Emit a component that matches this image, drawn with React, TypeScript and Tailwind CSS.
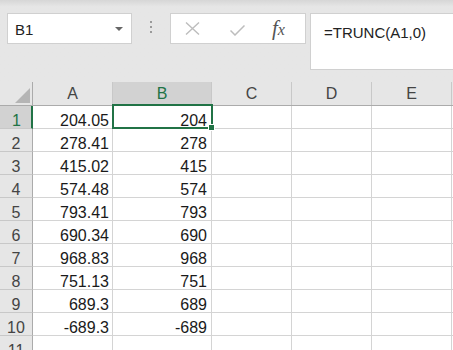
import React from "react";

const rowsData: [string, string][] = [
  ["204.05", "204"],
  ["278.41", "278"],
  ["415.02", "415"],
  ["574.48", "574"],
  ["793.41", "793"],
  ["690.34", "690"],
  ["968.83", "968"],
  ["751.13", "751"],
  ["689.3", "689"],
  ["-689.3", "-689"],
  ["", ""],
];

export default function App() {
  return (
    <div className="w-[453px] h-[350px] overflow-hidden bg-[#e6e6e6] font-['Liberation_Sans','Noto_Sans_CJK_SC',sans-serif] text-[#1a1a1a]">
      {/* Top: name box + formula bar */}
      <div className="h-[82px] bg-gradient-to-b from-[#d6d6d6] via-[#e6e6e6] via-[8%] to-[#e6e6e6]">
        <div className="flex items-start pt-[13px] pl-[7px]">
          <div className="w-[125px] h-[31px] border border-[#d0d0d0] bg-white flex items-center pl-[7px] pr-[7px]">
            <span className="text-[15px] leading-none text-[#222] mt-[1px]">B1</span>
            <span className="ml-auto mr-[1px] mt-[1px] w-0 h-0 border-l-[4px] border-r-[4px] border-t-[4px] border-l-transparent border-r-transparent border-t-[#666]" />
          </div>
          <div className="w-[38px] h-[31px] flex flex-col items-center pt-[8px] gap-[3px]">
            <span className="w-[2px] h-[2px] bg-[#9a9a9a]" />
            <span className="w-[2px] h-[2px] bg-[#9a9a9a]" />
            <span className="w-[2px] h-[2px] bg-[#9a9a9a]" />
          </div>
          <div className="w-[136px] h-[31px] border border-[#d0d0d0] bg-white flex items-center">
            <svg className="ml-[14px]" width="15" height="13" viewBox="0 0 15 13">
              <path d="M1 0.5 L14 12.5 M14 0.5 L1 12.5" stroke="#bdbdbd" strokeWidth="1.4" fill="none" />
            </svg>
            <svg className="ml-[30px] mt-[3px]" width="15" height="11" viewBox="0 0 15 11">
              <path d="M0.5 5.5 L5 10 L14.5 0.5" stroke="#bdbdbd" strokeWidth="1.5" fill="none" />
            </svg>
            <span className="ml-[27px] font-['Liberation_Serif',serif] italic text-[#555] text-[21px] leading-none">
              f<span className="text-[16px]">x</span>
            </span>
          </div>
          <div className="ml-[4px] flex-1 h-[57px] border border-r-0 border-[#d0d0d0] bg-white pl-[13px] pt-[7px]">
            <span className="text-[15px] leading-[18px] text-[#222]">=TRUNC(A1,0)</span>
          </div>
        </div>
      </div>

      {/* Grid */}
      <div className="relative">
        {/* Header row */}
        <div className="flex h-[24px] border-b border-[#ababab]">
          <div className="w-[33px] shrink-0 border-r border-[#ababab] relative">
            <svg className="absolute left-[15px] top-[6px]" width="15" height="15" viewBox="0 0 15 15">
              <path d="M15 0 L15 15 L0 15 Z" fill="#b5b5b5" />
            </svg>
          </div>
          <div className="w-[80px] shrink-0 border-r border-[#c8c8c8] flex items-center justify-center text-[16px] text-[#444] leading-none pt-[1px]">A</div>
          <div className="w-[99px] shrink-0 border-r border-[#c8c8c8] bg-[#d2d2d2] flex items-center justify-center text-[16px] text-[#217346] leading-none pt-[1px]">B</div>
          <div className="w-[80px] shrink-0 border-r border-[#c8c8c8] flex items-center justify-center text-[16px] text-[#444] leading-none pt-[1px]">C</div>
          <div className="w-[80px] shrink-0 border-r border-[#c8c8c8] flex items-center justify-center text-[16px] text-[#444] leading-none pt-[1px]">D</div>
          <div className="w-[80px] shrink-0 border-r border-[#c8c8c8] flex items-center justify-center text-[16px] text-[#444] leading-none pt-[1px]">E</div>
          <div className="flex-1" />
        </div>

        {rowsData.map(([a, b], i) => {
          const sel = i === 0;
          return (
            <div key={i} className="flex h-[23px]">
              <div
                className={
                  sel
                    ? "w-[33px] shrink-0 bg-[#d2d2d2] border-r-2 border-r-[#217346] border-b border-b-[#c8c8c8] flex items-end justify-center text-[16px] leading-[13px] text-[#217346] pl-[2px]"
                    : "w-[33px] shrink-0 bg-[#e6e6e6] border-r border-r-[#ababab] border-b border-b-[#c8c8c8] flex items-end justify-center text-[16px] leading-[13px] text-[#444]"
                }
              >
                <span className="pb-[1px]">{i + 1}</span>
              </div>
              <div className="w-[80px] shrink-0 bg-white border-r border-b border-[#d4d4d4] flex items-end justify-end pr-[3px] text-[16px] leading-[13px]">
                <span className="pb-[1px]">{a}</span>
              </div>
              <div className="w-[99px] shrink-0 bg-white border-r border-b border-[#d4d4d4] flex items-end justify-end pr-[4px] text-[16px] leading-[13px]">
                <span className="pb-[1px]">{b}</span>
              </div>
              <div className="w-[80px] shrink-0 bg-white border-r border-b border-[#d4d4d4]" />
              <div className="w-[80px] shrink-0 bg-white border-r border-b border-[#d4d4d4]" />
              <div className="w-[80px] shrink-0 bg-white border-r border-b border-[#d4d4d4]" />
              <div className="flex-1 bg-white border-b border-[#d4d4d4]" />
            </div>
          );
        })}

        {/* Selection box */}
        <div className="absolute left-[112px] top-[22px] w-[101px] h-[25px] border-2 border-[#217346] pointer-events-none" />
        <div className="absolute left-[208px] top-[42px] w-[7px] h-[7px] bg-[#217346] border border-white" />
      </div>
    </div>
  );
}
